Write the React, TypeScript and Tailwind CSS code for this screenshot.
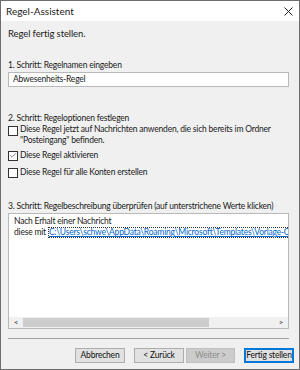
import { Check } from 'lucide-react'

function Box({ checked, className }: { checked?: boolean; className?: string }) {
    return (
        <div
            className={`flex h-[10px] w-[10px] shrink-0 items-center justify-center border border-[#333333] bg-white ${className ?? ''}`}
        >
            {checked ? <Check size={9} strokeWidth={1.5} color="#222222" /> : null}
        </div>
    )
}

function Btn({ label, kind }: { label: string; kind?: 'disabled' | 'default' }) {
    if (kind === 'disabled') {
        return (
            <div className="flex h-[15px] w-[49px] items-center justify-center border border-[#bfbfbf] bg-[#cccccc] text-[#8d8d8d]">
                {label}
            </div>
        )
    }
    if (kind === 'default') {
        return (
            <div className="flex h-[15px] w-[50px] items-center justify-center border-2 border-[#0078d7] bg-[#e1e1e1] text-[#111111]">
                {label}
            </div>
        )
    }
    return (
        <div className="flex h-[15px] w-[50px] items-center justify-center border border-[#adadad] bg-[#e1e1e1] text-[#111111]">
            {label}
        </div>
    )
}

export default function App() {
    return (
        <div
            className="flex h-[370px] w-[300px] flex-col overflow-hidden whitespace-nowrap border border-[#6d6d6d] bg-[#f0f0f0] text-[8.5px] leading-[11px] tracking-[-0.2px] text-[#1a1a1a]"
            style={{ fontFamily: 'Lato, sans-serif' }}
        >
            <div className="flex h-[20px] shrink-0 items-center justify-between bg-white pl-[5px] pr-[5px]">
                <span className="text-[10px] tracking-[0px]">Regel-Assistent</span>
                <svg width="9" height="9" viewBox="0 0 9 9" className="mr-[1px]">
                    <path d="M0.5 0.5 L8.5 8.5 M8.5 0.5 L0.5 8.5" stroke="#222222" strokeWidth="1" />
                </svg>
            </div>

            <div className="flex flex-col pl-[7px] pr-[9px]">
                <div className="mt-[7px] text-[9.5px] tracking-[-0.1px]">Regel fertig stellen.</div>

                <div className="mt-[21px]">1. Schritt: Regelnamen eingeben</div>
                <div className="mt-[1px] flex h-[15px] w-[281px] items-center border border-[#b9b9b9] bg-white pl-[4px]">
                    Abwesenheits-Regel
                </div>

                <div className="mt-[26px]">2. Schritt: Regeloptionen festlegen</div>
                <div className="flex gap-[2px]">
                    <Box className="mt-[2px]" />
                    <div>
                        <div>Diese Regel jetzt auf Nachrichten anwenden, die sich bereits im Ordner</div>
                        <div>&quot;Posteingang&quot; befinden.</div>
                    </div>
                </div>
                <div className="mt-[4px] flex items-center gap-[2px]">
                    <Box checked />
                    <div>Diese Regel aktivieren</div>
                </div>
                <div className="mt-[6px] flex items-center gap-[2px]">
                    <Box />
                    <div>Diese Regel für alle Konten erstellen</div>
                </div>

                <div className="mt-[23px]">
                    3. Schritt: Regelbeschreibung überprüfen (auf unterstrichene Werte klicken)
                </div>
                <div className="mt-[1px] flex h-[116px] w-[281px] flex-col border border-[#b9b9b9] bg-white">
                    <div className="flex-1 overflow-hidden pl-[5px] pt-[2px]">
                        <div>Nach Erhalt einer Nachricht</div>
                        <div className="flex">
                            <span>diese mit&nbsp;</span>
                            <span className="border border-dotted border-[#333333] leading-[9px] text-[#0066cc] underline">
                                C:\Users\schwe\AppData\Roaming\Microsoft\Templates\Vorlage-Outlook.oft
                            </span>
                        </div>
                    </div>
                    <div className="flex h-[11px] shrink-0 items-center bg-[#f0f0f0]">
                        <div className="flex w-[14px] items-center justify-center text-[8px] font-bold text-[#555555]">
                            &lt;
                        </div>
                        <div className="h-[9px] w-[186px] bg-[#cdcdcd]" />
                        <div className="flex-1" />
                        <div className="flex w-[14px] items-center justify-center text-[8px] font-bold text-[#555555]">
                            &gt;
                        </div>
                    </div>
                </div>

                <div className="mt-[9px] h-[1px] w-[281px] bg-[#a0a0a0]" />

                <div className="mt-[9px] flex justify-end">
                    <div className="mr-[-4px] flex">
                        <Btn label="Abbrechen" />
                        <div className="ml-[9px] flex gap-[2px]">
                            <Btn label="< Zurück" />
                            <Btn label="Weiter >" kind="disabled" />
                        </div>
                        <div className="ml-[9px]">
                            <Btn label="Fertig stellen" kind="default" />
                        </div>
                    </div>
                </div>
            </div>
        </div>
    )
}
